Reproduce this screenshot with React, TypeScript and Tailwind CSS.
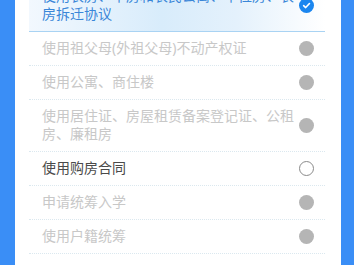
import React from "react";

type Item = { lines: string[]; state: "checked" | "empty" | "disabled" };

const items: Item[] = [
  { lines: ["使用农房、单房和农民公寓、单位房、农", "房拆迁协议"], state: "checked" },
  { lines: ["使用祖父母(外祖父母)不动产权证"], state: "disabled" },
  { lines: ["使用公寓、商住楼"], state: "disabled" },
  { lines: ["使用居住证、房屋租赁备案登记证、公租", "房、廉租房"], state: "disabled" },
  { lines: ["使用购房合同"], state: "empty" },
  { lines: ["申请统筹入学"], state: "disabled" },
  { lines: ["使用户籍统筹"], state: "disabled" },
];

function Mark({ state }: { state: Item["state"] }) {
  if (state === "checked") {
    return (
      <span className="flex h-[15px] w-[15px] shrink-0 items-center justify-center rounded-full bg-[#1b86ef]">
        <svg width="9" height="9" viewBox="0 0 10 10">
          <path d="M1.8 5.2 L4.1 7.3 L8.3 2.8" fill="none" stroke="#fff" strokeWidth="1.8" strokeLinecap="round" strokeLinejoin="round" />
        </svg>
      </span>
    );
  }
  if (state === "empty") {
    return <span className="h-[15px] w-[15px] shrink-0 rounded-full border border-[#8a8a8a] bg-white" />;
  }
  return <span className="h-[15px] w-[15px] shrink-0 rounded-full bg-[#b5b5b5]" />;
}

export default function App() {
  return (
    <div className="flex h-[265px] w-[354px] overflow-hidden bg-[#3a8ef6] pl-[15px] pr-[13px]" style={{ fontFamily: '"Noto Sans", "Noto Sans CJK SC", sans-serif' }}>
      <div className="flex flex-1 flex-col overflow-hidden bg-white pl-[14px] pr-[16px]">
        <div className="-mt-[20px]">
          {items.map((it, i) => {
            const checked = it.state === "checked";
            const color = checked ? "text-[#3a86d8]" : it.state === "empty" ? "text-[#4a4a4a]" : "text-[#c8c8c8]";
            return (
              <div
                key={i}
                className={
                  "flex items-center justify-between pb-[8px] pl-[13px] pr-[11px] pt-[7px] " +
                  (checked
                    ? "border-b border-solid border-[#a9d3f3] bg-[linear-gradient(90deg,#f2f8fe_0%,#d8ecfb_45%,#e4f1fc_70%,#ffffff_100%)]"
                    : "border-b border-dotted border-[#dbe8ef]")
                }
              >
                <div className={"text-[14px] leading-[18px] " + color}>
                  {it.lines.map((l, j) => (
                    <div key={j} className="whitespace-nowrap">{l}</div>
                  ))}
                </div>
                <Mark state={it.state} />
              </div>
            );
          })}
        </div>
      </div>
    </div>
  );
}
